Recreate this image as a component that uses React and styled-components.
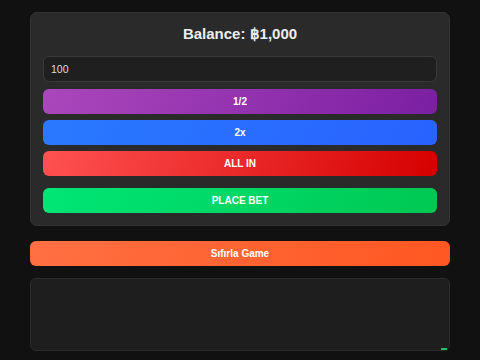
import React from "react";
import styled, { createGlobalStyle } from "styled-components";

const Global = createGlobalStyle`
  html, body { margin: 0; padding: 0; background: #111111; }
  body { font-family: "Liberation Sans", Arial, sans-serif; color: #eee; }
`;

const Page = styled.div`
  width: 420px;
  margin: 0 auto;
  padding-top: 12px;
  display: flex;
  flex-direction: column;
`;

const Card = styled.div`
  background: #2a2a2a;
  border: 1px solid #353535;
  border-radius: 7px;
  padding: 11px 12px 12px;
  display: flex;
  flex-direction: column;
  box-sizing: border-box;
`;

const Title = styled.h2`
  margin: 0 0 12px;
  text-align: center;
  font-size: 15px;
  font-weight: 700;
  color: #eeeeee;
  line-height: 20px;
`;

const Input = styled.input`
  height: 26px;
  box-sizing: border-box;
  background: #1f1f1f;
  border: 1px solid #3a3a3a;
  border-radius: 6px;
  color: #dddddd;
  font-family: "Liberation Sans", Arial, sans-serif;
  font-size: 10.5px;
  padding: 0 7px;
  margin-bottom: 7px;
  outline: none;
`;

const Btn = styled.button`
  height: 25px;
  border: none;
  border-radius: 6px;
  color: #fff;
  font-family: "Liberation Sans", Arial, sans-serif;
  font-weight: 700;
  font-size: 10px;
  background: ${(p) => p.$bg};
  margin-top: ${(p) => p.$mt || 0}px;
  padding: 0;
  cursor: pointer;
`;

const Stack = styled.div`
  display: flex;
  flex-direction: column;
  gap: 6px;
`;

const Reset = styled(Btn)`
  margin-top: 15px;
  height: 25px;
`;

const Panel = styled.div`
  position: relative;
  margin-top: 12px;
  height: 71px;
  background: #1e1e1e;
  border: 1px solid #2b2b2b;
  border-radius: 6px;
`;

const Tick = styled.div`
  position: absolute;
  right: 2px;
  bottom: 0px;
  width: 6px;
  height: 2px;
  background: #1fbf6a;
`;

export default function App() {
  return (
    <>
      <Global />
      <Page>
        <Card>
          <Title>Balance: ฿1,000</Title>
          <Input defaultValue="100" />
          <Stack>
            <Btn $bg="linear-gradient(110deg, #ab47bc, #7b1fa2)">1/2</Btn>
            <Btn $bg="linear-gradient(110deg, #2979ff, #2962ff)">2x</Btn>
            <Btn $bg="linear-gradient(110deg, #ff5252, #d50000)">ALL IN</Btn>
            <Btn $mt={6} $bg="linear-gradient(110deg, #00e676, #00c853)">PLACE BET</Btn>
          </Stack>
        </Card>
        <Reset $bg="linear-gradient(110deg, #ff7043, #ff5722)">Sıfırla Game</Reset>
        <Panel>
          <Tick />
        </Panel>
      </Page>
    </>
  );
}
